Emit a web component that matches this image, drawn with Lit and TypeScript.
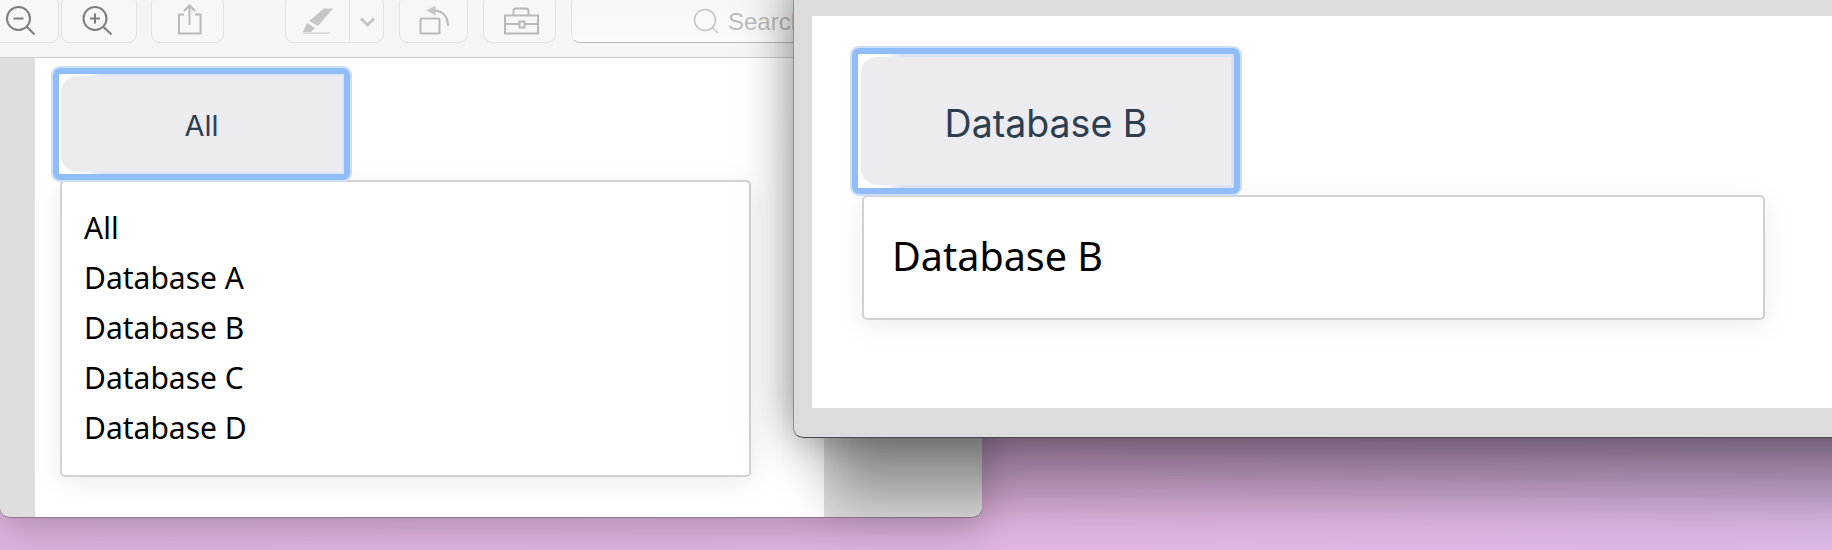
import { LitElement, html, css, svg } from "lit";
import { customElement } from "lit/decorators.js";

const BACK_ITEMS = ["All", "Database A", "Database B", "Database C", "Database D"];
const FRONT_ITEMS = ["Database B"];

const zoomOut = svg`
  <circle cx="14.5" cy="14.5" r="11.500" />
  <path d="M9.500 14.500h10M23 23l7.500 7.500" />`;
const zoomIn = svg`
  <circle cx="14" cy="14.500" r="11.500" />
  <path d="M9 14.500h10M14 9.500v10M22.500 23l8 7.500" />`;
const share = svg`
  <path d="M14 10.500H9V29.500H30.500V10.500H25M19.500 21V2M14 7 19.500 1.500 25 7" />`;
const marker = svg`
  <path class="solid" d="M9 17 24 4.500h9L18 22z" />
  <path class="solid" d="M7 19l8 5-4 4H3z" />
  <path class="thin" d="M3 29h27" />`;
const chevron = svg`<path class="heavy" d="M12 14.500l6.500 6.500 6.500-6.500" />`;
const rotate = svg`
  <rect x="4.500" y="14.500" width="19" height="15" rx="1" />
  <path d="M32 22C32 13 27 7 19 6.500" />
  <path class="solid" d="M19.500 1.500v10l-9-5z" />`;
const toolbox = svg`
  <path d="M3 11.500H36V29.500H3zM3 20H17.500M22.500 20H36M11.500 11.500V7a2.500 2.500 0 0 1 2.500-2.500H24A2.500 2.500 0 0 1 26.500 7V11.500M17.500 17.500h5v6h-5z" />`;
const search = svg`
  <circle cx="14" cy="14" r="10.500" />
  <path d="M21.500 21.500l5.500 5.500" />`;

const icon = (content: unknown, cls = "") =>
  html`<svg class="icon ${cls}" viewBox="0 0 36 36">${content}</svg>`;

@customElement("app-root")
export class AppRoot extends LitElement {
  static styles = css`
    :host {
      display: block;
      width: 1832px;
      height: 550px;
      font-family: "Inter", "Liberation Sans", sans-serif;
    }
    .desktop {
      position: relative;
      width: 100%;
      height: 100%;
      overflow: hidden;
      background: linear-gradient(90deg, #e0b5e0 0%, #e4b7e4 60%, #dcb9e6 100%);
    }
    .window {
      position: absolute;
      box-sizing: border-box;
      display: flex;
      flex-direction: column;
      border-radius: 0 0 10px 10px;
    }
    .back {
      left: 0;
      top: 0;
      width: 982px;
      height: 518px;
      background: #dedede;
      border-bottom: 1px solid #8d7a8d;
      box-shadow: 0 10px 40px rgba(0, 0, 0, 0.24);
      overflow: hidden;
    }
    .front {
      left: 793px;
      top: -20px;
      width: 1240px;
      height: 458px;
      padding: 36px 0 29px 18px;
      background: #dcdcdc;
      border-left: 1px solid #8e8e8e;
      border-bottom: 1px solid #4e4458;
      box-shadow:
        0 0 50px rgba(0, 0, 0, 0.5),
        0 104px 50px -40px rgba(0, 0, 0, 0.3);
    }
    .toolbar {
      display: flex;
      align-items: flex-start;
      height: 58px;
      flex: none;
      box-sizing: border-box;
      background: #f5f5f5;
      border-bottom: 1px solid #cdcdcd;
    }
    .tool {
      display: flex;
      align-items: center;
      justify-content: center;
      box-sizing: border-box;
      flex: none;
      height: 49px;
      margin-top: -6px;
      border: 1.5px solid #e1e1e1;
      border-radius: 9px;
      background: #f7f7f7;
    }
    .icon {
      width: 36px;
      height: 36px;
      margin-top: 6px;
      overflow: visible;
      fill: none;
      stroke: #b9b9b9;
      stroke-width: 2;
    }
    .icon.dark {
      stroke: #7c7c7c;
    }
    .icon .solid {
      fill: #c6c6c6;
      stroke: none;
    }
    .icon .thin {
      stroke: #d8d8d8;
      stroke-width: 1.5;
    }
    .icon .heavy {
      stroke: #c4c4c4;
      stroke-width: 3;
    }
    .zoom-out {
      width: 75px;
      margin-left: -16px;
    }
    .zoom-in {
      width: 76px;
      margin-left: 2px;
    }
    .share {
      width: 73px;
      margin-left: 14px;
    }
    .pen {
      width: 65px;
      margin-left: 61px;
      border-radius: 9px 0 0 9px;
    }
    .caret {
      width: 35px;
      margin-left: -1px;
      border-radius: 0 9px 9px 0;
    }
    .rotate {
      width: 69px;
      margin-left: 15px;
    }
    .toolbox {
      width: 73px;
      margin-left: 15px;
    }
    .search {
      width: 360px;
      margin-left: 15px;
      justify-content: flex-start;
      padding: 6px 0 0 119px;
      gap: 9px;
      background: linear-gradient(180deg, #f6f6f6, #fbfbfb);
      border-bottom-color: #b9b9b9;
      color: #bcbcbc;
      font-family: "Liberation Sans", sans-serif;
      font-size: 24px;
    }
    .search .icon {
      width: 28px;
      height: 28px;
      margin-top: -3px;
      stroke: #c4c4c4;
      stroke-width: 1.500;
    }
    .body {
      flex: 1;
      display: flex;
    }
    .rail {
      width: 35px;
      flex: none;
    }
    .page {
      width: 789px;
      flex: none;
      box-sizing: border-box;
      padding: 10px 0 0 18px;
      background: #fff;
    }
    .inner {
      flex: 1;
      padding: 32px 0 0 40px;
      background: #fff;
    }
    .select {
      box-sizing: border-box;
      border: 6px solid #90bcf7;
      border-radius: 7px;
      background: linear-gradient(90deg, #fff 0, #fff 24px, #dae4f6 44px);
      box-shadow: 0 0 0 2px #cddffb;
      position: relative;
      z-index: 1;
    }
    .select span {
      display: flex;
      align-items: center;
      justify-content: center;
      box-sizing: border-box;
      height: 100%;
      background: #ebebf0;
      border-radius: 16px 0 0 16px;
      color: #2c3e50;
    }
    .back .select {
      width: 297px;
      height: 112px;
      padding: 2px;
      font-size: 29px;
    }
    .back .select span {
      padding-top: 2px;
    }
    .front .select {
      width: 388px;
      height: 146px;
      padding: 3px;
      font-size: 37.500px;
    }
    .front .select span {
      padding-top: 4px;
    }
    .menu {
      box-sizing: border-box;
      background: #fff;
      border: 2px solid #d2d2d2;
      border-radius: 5px;
      box-shadow: 0 6px 28px rgba(0, 0, 0, 0.08);
      color: #000;
      font-family: "Noto Sans", "Open Sans", sans-serif;
    }
    .back .menu {
      width: 691px;
      height: 297px;
      margin: 0 0 0 7px;
      padding: 21px 22px;
      font-size: 30px;
      line-height: 50px;
    }
    .front .menu {
      width: 903px;
      height: 125px;
      margin: 1px 0 0 10px;
      padding: 29px 28px;
      font-size: 39.500px;
      line-height: 60px;
    }
  `;

  render() {
    return html`
      <div class="desktop">
        <section class="window back">
          <div class="toolbar">
            <div class="tool zoom-out">${icon(zoomOut, "dark")}</div>
            <div class="tool zoom-in">${icon(zoomIn, "dark")}</div>
            <div class="tool share">${icon(share)}</div>
            <div class="tool pen">${icon(marker)}</div>
            <div class="tool caret">${icon(chevron)}</div>
            <div class="tool rotate">${icon(rotate)}</div>
            <div class="tool toolbox">${icon(toolbox)}</div>
            <div class="tool search">
              <svg class="icon" viewBox="0 0 28 28">${search}</svg>Search
            </div>
          </div>
          <div class="body">
            <div class="rail"></div>
            <div class="page">
              <div class="select"><span>All</span></div>
              <div class="menu">
                ${BACK_ITEMS.map((item) => html`<div>${item}</div>`)}
              </div>
            </div>
          </div>
        </section>
        <section class="window front">
          <div class="inner">
            <div class="select"><span>Database B</span></div>
            <div class="menu">
              ${FRONT_ITEMS.map((item) => html`<div>${item}</div>`)}
            </div>
          </div>
        </section>
      </div>
    `;
  }
}
